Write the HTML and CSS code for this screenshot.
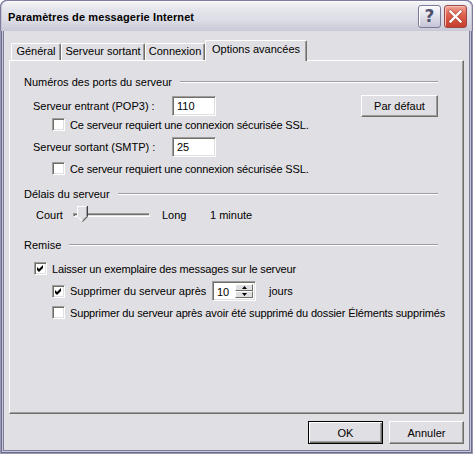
FILE: index.html
```html
<!DOCTYPE html>
<html lang="fr">
<head>
<meta charset="utf-8">
<title>Paramètres de messagerie Internet</title>
<link rel="stylesheet" href="styles.css">
</head>
<body>
<div class="window">
  <div class="titlebar">
    <span class="title">Paramètres de messagerie Internet</span>
    <div class="tb-buttons">
      <div class="tb-btn help">?</div>
      <div class="tb-btn close">
        <svg width="15" height="15" viewBox="0 0 15 15"><path d="M2.5 2.5 L12.5 12.5 M12.5 2.5 L2.5 12.5" stroke="#7a2418" stroke-width="3.6" stroke-linecap="square" opacity=".45"/><path d="M2.5 2.5 L12.5 12.5 M12.5 2.5 L2.5 12.5" stroke="#fff" stroke-width="2.4" stroke-linecap="square"/></svg>
      </div>
    </div>
  </div>
  <div class="client">
    <div class="tabs">
      <div class="tab t1">Général</div>
      <div class="tab t2">Serveur sortant</div>
      <div class="tab t3">Connexion</div>
      <div class="tab t4 active">Options avancées</div>
    </div>
    <div class="panel">
      <div class="group-head g1"><span>Numéros des ports du serveur</span><i class="etch"></i></div>

      <div class="port-row r-pop">
        <span class="port-label">Serveur entrant (POP3) :</span>
        <div class="edit">110</div>
        <div class="grow"></div>
        <div class="btn btn-def">Par défaut</div>
      </div>
      <div class="check-row lvl2 r-ssl1"><span class="cb"></span><span>Ce serveur requiert une connexion sécurisée SSL.</span></div>

      <div class="port-row r-smtp">
        <span class="port-label">Serveur sortant (SMTP) :</span>
        <div class="edit">25</div>
      </div>
      <div class="check-row lvl2 r-ssl2"><span class="cb"></span><span>Ce serveur requiert une connexion sécurisée SSL.</span></div>

      <div class="group-head g2"><span>Délais du serveur</span><i class="etch"></i></div>
      <div class="slider-row">
        <span class="sl-court">Court</span>
        <div class="slider">
          <div class="track"></div>
          <svg class="thumb" width="11" height="16" viewBox="0 0 11 16">
            <path d="M0.5 0.5 H10.5 V10.5 L5.5 15.5 L0.5 10.5 Z" fill="#e0dfe3"/>
            <path d="M0.5 10.5 V0.5 H9.5" fill="none" stroke="#ffffff"/>
            <path d="M1 11 L5 15" fill="none" stroke="#ffffff"/>
            <path d="M10.5 0 V10.7 L5.5 15.7" fill="none" stroke="#404040"/>
            <path d="M9.5 1 V10.3 L5.5 14.3" fill="none" stroke="#9d9da1"/>
          </svg>
        </div>
        <span class="sl-long">Long</span>
        <span>1 minute</span>
      </div>

      <div class="group-head g3"><span>Remise</span><i class="etch"></i></div>
      <div class="check-row lvl1 r-keep"><span class="cb checked"><svg width="7" height="7" viewBox="0 0 7 7"><path d="M0 2 L2 4 L6 0 L6 3 L2 7 L0 5 Z" fill="#000"/></svg></span><span>Laisser un exemplaire des messages sur le serveur</span></div>
      <div class="check-row lvl2 r-del">
        <span class="cb checked"><svg width="7" height="7" viewBox="0 0 7 7"><path d="M0 2 L2 4 L6 0 L6 3 L2 7 L0 5 Z" fill="#000"/></svg></span>
        <span class="del-label">Supprimer du serveur après</span>
        <div class="spin">
          <span class="spin-val">10</span>
          <div class="spin-btns">
            <div class="spin-btn"><svg width="5" height="3" viewBox="0 0 5 3"><path d="M2.5 0 L5 3 L0 3 Z" fill="#000"/></svg></div>
            <div class="spin-btn"><svg width="5" height="3" viewBox="0 0 5 3"><path d="M0 0 L5 0 L2.5 3 Z" fill="#000"/></svg></div>
          </div>
        </div>
        <span class="jours">jours</span>
      </div>
      <div class="check-row lvl2 r-del2"><span class="cb"></span><span>Supprimer du serveur après avoir été supprimé du dossier Éléments supprimés</span></div>
    </div>
    <div class="footer">
      <div class="btn btn-foot default">OK</div>
      <div class="btn btn-foot">Annuler</div>
    </div>
  </div>
</div>
</body>
</html>
```

FILE: styles.css
```css
* { box-sizing: border-box; }
html, body { margin: 0; padding: 0; background: #ffffff; }
body {
  font-family: "Liberation Sans", Arial, sans-serif;
  font-size: 11px;
  color: #000;
}

.window {
  width: 473px;
  height: 454px;
  background: #e0dfe3;
  border-radius: 7px 7px 0 0;
  box-shadow: inset 0 0 0 1px #9a9ab4, inset 0 0 0 2px #6b6b8e, inset 0 0 0 3px #c6c6d6, inset 0 0 0 4px #7c7c9c;
  display: flex;
  flex-direction: column;
  overflow: hidden;
}

/* Title bar */
.titlebar {
  height: 31px;
  flex: none;
  display: flex;
  align-items: center;
  padding: 2px 5px 0 7px;
  border: 1px solid #7c7c9c;
  border-bottom: none;
  border-radius: 7px 7px 0 0;
  background: linear-gradient(to bottom, #ffffff 0, #f0f0f4 2px, #e4e4ec 30%, #dcdce6 65%, #c9c9d6 100%);
  box-shadow: inset 1px 0 #c6c6d6, inset -1px 0 #c6c6d6;
}
.title {
  font-weight: bold;
  font-size: 11px;
  color: #000;
  flex: 1;
  letter-spacing: 0.1px;
}
.tb-buttons { display: flex; gap: 3px; margin-top: -2px; }
.tb-btn {
  width: 23px;
  height: 23px;
  border-radius: 3px;
  display: flex;
  align-items: center;
  justify-content: center;
}
.help {
  background: linear-gradient(to bottom, #fbfbfd 0, #e2e2ec 45%, #c4c4d6 100%);
  border: 1px solid #7a7a98;
  color: #50506c;
  font-family: "DejaVu Sans", sans-serif;
  font-weight: bold;
  font-size: 17px;
  line-height: 1;
  box-shadow: inset 1px 1px #ffffff;
}
.close {
  background: linear-gradient(to bottom, #f0a898 0, #de6450 40%, #c83e2c 100%);
  border: 1px solid #9a4848;
  box-shadow: inset 1px 1px #f6c0b4;
}

/* Client area */
.client {
  flex: 1;
  padding: 9px 9px 0 9px;
  display: flex;
  flex-direction: column;
}

.tabs {
  display: flex;
  align-items: flex-end;
  height: 20px;
  padding-left: 2px;
}
.tab {
  height: 17px;
  line-height: 15px;
  text-align: center;
  border-top: 1px solid #ffffff;
  border-left: 1px solid #ffffff;
  border-right: 1px solid #716f64;
  border-radius: 2px 2px 0 0;
  box-shadow: inset -1px 0 #9d9da1;
  background: #e0dfe3;
  white-space: nowrap;
}
.t1 { width: 50px; }
.t2 { width: 84px; }
.t3 { width: 60px; }
.t4 { width: 102px; }
.tab.active {
  height: 21px;
  line-height: 17px;
  margin-bottom: -1px;
  position: relative;
  z-index: 1;
}

.panel {
  height: 354px;
  flex: none;
  background: #e0dfe3;
  border-top: 1px solid #ffffff;
  border-left: 1px solid #ffffff;
  border-right: 1px solid #716f64;
  border-bottom: 1px solid #716f64;
  box-shadow: inset -1px -1px #9d9da1;
  padding: 14px 0 0 0;
}

.group-head {
  display: flex;
  align-items: center;
  height: 14px;
  padding-left: 14px;
  padding-right: 25px;
}
.etch {
  flex: 1;
  height: 2px;
  margin-left: 8px;
  border-top: 1px solid #9d9da1;
  border-bottom: 1px solid #ffffff;
}
.g2 { margin-top: 12px; }
.g3 { margin-top: 13px; }

.port-row {
  display: flex;
  align-items: center;
  padding-left: 23px;
  padding-right: 25px;
}
.r-pop { height: 22px; margin-top: 6px; }
.r-smtp { height: 20px; margin-top: 6px; }
.port-label { width: 139px; }
.grow { flex: 1; }

.edit {
  width: 44px;
  height: 20px;
  background: #ffffff;
  border-top: 1px solid #9d9da1;
  border-left: 1px solid #9d9da1;
  border-right: 1px solid #ffffff;
  border-bottom: 1px solid #ffffff;
  box-shadow: inset 1px 1px #716f64, inset -1px -1px #e0dfe3;
  padding-left: 4px;
  line-height: 18px;
}

.btn {
  background: #e0dfe3;
  border-top: 1px solid #ffffff;
  border-left: 1px solid #ffffff;
  border-right: 1px solid #716f64;
  border-bottom: 1px solid #716f64;
  box-shadow: inset -1px -1px #9d9da1;
  display: flex;
  align-items: center;
  justify-content: center;
}
.btn-def { width: 77px; height: 22px; }
.btn-foot { width: 75px; height: 23px; }
.btn.default {
  border: 1px solid #000000;
  box-shadow: inset 1px 1px #ffffff, inset -1px -1px #716f64, inset -2px -2px #9d9da1;
}

.check-row {
  display: flex;
  align-items: center;
  height: 13px;
  white-space: nowrap;
  letter-spacing: -0.15px;
}
.lvl1 { padding-left: 24px; }
.lvl2 { padding-left: 42px; }
.r-ssl1 { margin-top: 1px; }
.r-ssl2 { margin-top: 5px; }
.r-keep { margin-top: 10px; }
.r-del { height: 20px; margin-top: 6px; letter-spacing: 0; }
.r-del2 { margin-top: 5px; }

.cb {
  width: 13px;
  height: 13px;
  flex: none;
  margin-right: 5px;
  background: #ffffff;
  border-top: 1px solid #9d9da1;
  border-left: 1px solid #9d9da1;
  border-right: 1px solid #ffffff;
  border-bottom: 1px solid #ffffff;
  box-shadow: inset 1px 1px #716f64, inset -1px -1px #e0dfe3;
  display: flex;
  align-items: center;
  justify-content: center;
}
.cb svg { display: block; }

.slider-row {
  display: flex;
  align-items: center;
  height: 20px;
  margin-top: 4px;
  padding-left: 26px;
}
.sl-court { width: 37px; }
.slider {
  width: 77px;
  height: 16px;
  position: relative;
  display: flex;
  align-items: center;
}
.track {
  width: 77px;
  height: 4px;
  border-top: 1px solid #9d9da1;
  border-left: 1px solid #9d9da1;
  border-right: 1px solid #ffffff;
  border-bottom: 1px solid #ffffff;
  box-shadow: inset 1px 1px #716f64;
  background: #e0dfe3;
}
.thumb {
  position: absolute;
  left: 4px;
  top: -1px;
  z-index: 1;
}
.sl-long { margin-left: 12px; width: 48px; }

.del-label { width: 142px; }
.spin {
  width: 44px;
  height: 20px;
  display: flex;
  background: #ffffff;
  border-top: 1px solid #9d9da1;
  border-left: 1px solid #9d9da1;
  border-right: 1px solid #ffffff;
  border-bottom: 1px solid #ffffff;
  box-shadow: inset 1px 1px #716f64, inset -1px -1px #e0dfe3;
  padding: 2px;
}
.spin-val { flex: 1; line-height: 16px; padding-left: 2px; }
.spin-btns {
  width: 18px;
  display: flex;
  flex-direction: column;
}
.spin-btn {
  flex: 1;
  background: #e0dfe3;
  border-top: 1px solid #ffffff;
  border-left: 1px solid #ffffff;
  border-right: 1px solid #716f64;
  border-bottom: 1px solid #716f64;
  display: flex;
  align-items: center;
  justify-content: center;
}
.spin-btn svg { display: block; }
.jours { margin-left: 13px; }

.footer {
  display: flex;
  justify-content: flex-end;
  gap: 6px;
  margin-top: 7px;
}
```
